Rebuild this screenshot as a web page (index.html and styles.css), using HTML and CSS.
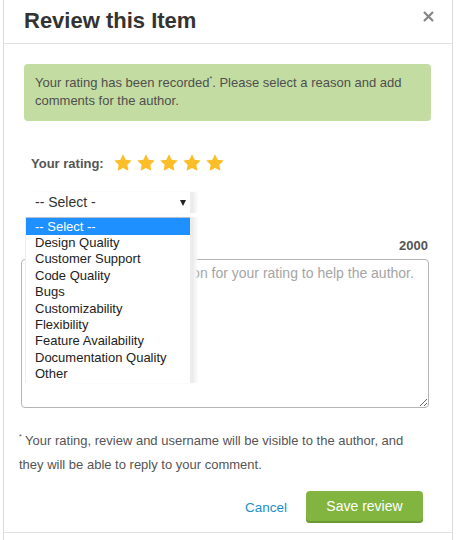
FILE: index.html
```html
<!DOCTYPE html>
<html lang="en">
<head>
    <meta charset="UTF-8">
    <meta name="viewport" content="width=device-width, initial-scale=1.0">
    <title>Review this Item</title>
    <link rel="stylesheet" href="styles.css">
</head>
<body>
    <div class="modal">
        <div class="modal-header">
            <h2 class="modal-title">Review this Item</h2>
            <button class="close" aria-label="Close">
                <svg width="11" height="11" viewBox="0 0 11 11"><path d="M1 1L10 10M10 1L1 10" stroke="#858585" stroke-width="2.2"/></svg>
            </button>
        </div>

        <div class="modal-body">
            <div class="alert">
                Your rating has been recorded<sup>*</sup>. Please select a reason and add comments for the author.
            </div>

            <div class="rating">
                <span class="rating-label">Your rating:</span>
                <span class="stars">
                    <svg viewBox="0 0 24 24"><path d="M12 1.5l3.2 6.6 7.3 1-5.3 5.1 1.3 7.2L12 18l-6.5 3.4 1.3-7.2L1.5 9.1l7.3-1z"/></svg>
                    <svg viewBox="0 0 24 24"><path d="M12 1.5l3.2 6.6 7.3 1-5.3 5.1 1.3 7.2L12 18l-6.5 3.4 1.3-7.2L1.5 9.1l7.3-1z"/></svg>
                    <svg viewBox="0 0 24 24"><path d="M12 1.5l3.2 6.6 7.3 1-5.3 5.1 1.3 7.2L12 18l-6.5 3.4 1.3-7.2L1.5 9.1l7.3-1z"/></svg>
                    <svg viewBox="0 0 24 24"><path d="M12 1.5l3.2 6.6 7.3 1-5.3 5.1 1.3 7.2L12 18l-6.5 3.4 1.3-7.2L1.5 9.1l7.3-1z"/></svg>
                    <svg viewBox="0 0 24 24"><path d="M12 1.5l3.2 6.6 7.3 1-5.3 5.1 1.3 7.2L12 18l-6.5 3.4 1.3-7.2L1.5 9.1l7.3-1z"/></svg>
                </span>
            </div>

            <div class="reason">
                <div class="reason-box">-- Select -</div>
                <ul class="reason-list">
                    <li class="selected">-- Select --</li>
                    <li>Design Quality</li>
                    <li>Customer Support</li>
                    <li>Code Quality</li>
                    <li>Bugs</li>
                    <li>Customizability</li>
                    <li>Flexibility</li>
                    <li>Feature Availability</li>
                    <li>Documentation Quality</li>
                    <li>Other</li>
                </ul>
            </div>

            <div class="counter">2000</div>
            <textarea class="comment" placeholder="Please describe the reason for your rating to help the author."></textarea>

            <p class="note"><sup>*</sup> Your rating, review and username will be visible to the author, and<br>they will be able to reply to your comment.</p>

            <div class="actions">
                <a href="#" class="cancel">Cancel</a>
                <button class="save">Save review</button>
            </div>
        </div>
        <div class="modal-footer"></div>
    </div>
</body>
</html>
```

FILE: styles.css
```css
body {
    margin: 0;
    background: #fff;
    font-family: "Liberation Sans", Arial, sans-serif;
    color: #555;
}
.modal {
    margin-left: 3px;
    width: 448px;
    border-left: 1px solid #d9d9d9;
    border-right: 1px solid #d9d9d9;
}
.modal-header {
    height: 43px;
    border-bottom: 1px solid #e2e2e2;
    display: flex;
    align-items: flex-start;
    justify-content: space-between;
}
.modal-title {
    margin: 8px 0 0 20px;
    font-size: 22px;
    line-height: 26px;
    font-weight: bold;
    color: #333;
}
.close {
    border: none;
    background: none;
    padding: 0;
    margin: 11px 18px 0 0;
    width: 11px;
    height: 11px;
    cursor: pointer;
}
.close svg {
    display: block;
}
.modal-body {
    padding-top: 20px;
}
.alert {
    margin: 0 21px 0 20px;
    padding: 10px 11px 11px;
    background: #c3dca1;
    border-radius: 4px;
    font-size: 13px;
    line-height: 18px;
    color: #4f4f4f;
}
.alert sup, .note sup {
    font-size: 7px;
    line-height: 0;
    vertical-align: 6px;
}
.rating {
    margin-top: 30px;
    padding-left: 27px;
    height: 24px;
    display: flex;
    align-items: center;
    gap: 9px;
}
.rating-label {
    font-size: 13px;
    font-weight: bold;
    color: #555;
}
.stars {
    display: flex;
    gap: 3px;
}
.stars svg {
    width: 20px;
    height: 20px;
    fill: #fbbd28;
}
.reason {
    position: relative;
    margin: 17px 0 0 22px;
    width: 164px;
    height: 21px;
}
.reason-box {
    height: 21px;
    line-height: 21px;
    padding-left: 9px;
    font-size: 14px;
    color: #333;
    background: #fff;
    box-shadow: 4px 0 0 #ececec, 7px 0 2px #f4f4f4;
    position: relative;
}
.reason-box::after {
    content: "";
    position: absolute;
    right: 4px;
    top: 8px;
    border-left: 3.5px solid transparent;
    border-right: 3.5px solid transparent;
    border-top: 6px solid #222;
}
.reason-list {
    position: absolute;
    top: 25px;
    left: 0;
    z-index: 2;
    width: 164px;
    margin: 0;
    padding: 0;
    list-style: none;
    background: #fff;
    border-top: 1px solid #b3c1d1;
    box-shadow: 4px 0 0 #ececec, 7px 0 2px #f4f4f4, -1px 0 0 #eee;
}
.reason-list li {
    padding-left: 9px;
    font-size: 13px;
    line-height: 16.4px;
    color: #222;
}
.reason-list li.selected {
    background: #1e90ff;
    color: #fff;
    line-height: 17px;
}
.counter {
    margin-top: 26px;
    padding-right: 24px;
    text-align: right;
    font-size: 13px;
    line-height: 14px;
    font-weight: bold;
    color: #555;
}
.comment {
    display: block;
    box-sizing: border-box;
    margin: 6px 0 0 17px;
    width: 408px;
    height: 149px;
    padding: 3px 12px 6px 16px;
    border: 1px solid #b5b5b5;
    border-radius: 4px;
    font-family: "Liberation Sans", Arial, sans-serif;
    font-size: 14px;
    line-height: 20px;
    resize: vertical;
}
.comment::placeholder {
    color: #a5a5a5;
}
.note {
    margin: 21px 0 0;
    padding-left: 15px;
    font-size: 13px;
    line-height: 24px;
    color: #555;
}
.actions {
    margin-top: 14px;
    padding-right: 29px;
    display: flex;
    justify-content: flex-end;
    align-items: center;
    gap: 19px;
}
.cancel {
    font-size: 13.5px;
    color: #1b8fc8;
    text-decoration: none;
}
.save {
    width: 117px;
    height: 32px;
    border: none;
    border-radius: 4px;
    background: #82b440;
    box-shadow: inset 0 -2px 0 #6c9a34;
    color: #fff;
    font-family: "Liberation Sans", Arial, sans-serif;
    font-size: 14px;
    padding: 0 0 2px;
    cursor: pointer;
}
.modal-footer {
    margin-top: 9px;
    border-top: 1px solid #e2e2e2;
    height: 20px;
}
```
